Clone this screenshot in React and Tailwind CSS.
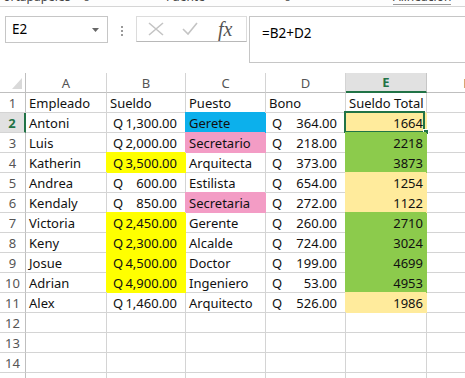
import React from "react";

const FONT = { fontFamily: "'Noto Sans', 'Open Sans', sans-serif" };

const data = [
  ["Antoni", "1,300.00", "Gerete", "364.00", "1664"],
  ["Luis", "2,000.00", "Secretario", "218.00", "2218"],
  ["Katherin", "3,500.00", "Arquitecta", "373.00", "3873"],
  ["Andrea", "600.00", "Estilista", "654.00", "1254"],
  ["Kendaly", "850.00", "Secretaria", "272.00", "1122"],
  ["Victoria", "2,450.00", "Gerente", "260.00", "2710"],
  ["Keny", "2,300.00", "Alcalde", "724.00", "3024"],
  ["Josue", "4,500.00", "Doctor", "199.00", "4699"],
  ["Adrian", "4,900.00", "Ingeniero", "53.00", "4953"],
  ["Alex", "1,460.00", "Arquitecto", "526.00", "1986"],
];

const yellowB = new Set([2, 5, 6, 7, 8]);

const base = "h-[20px] border-r border-b overflow-hidden whitespace-nowrap text-[13px] leading-[20px] text-[#111]";
const grid = "border-[#d4d4d4]";

function Cell({ children, className = "" }) {
  return <div className={`${base} ${className}`}>{children}</div>;
}

function RowHead({ n, active }) {
  return (
    <div
      className={`h-[20px] border-b border-[#d4d4d4] flex items-center justify-center text-[13px] leading-[20px] ${
        active
          ? "bg-[#e1e1e1] text-[#217346] font-bold border-r-2 border-r-[#217346]"
          : "border-r border-r-[#bfbfbf] text-[#555]"
      }`}
    >
      {n}
    </div>
  );
}

function Acct({ v, fill }) {
  return (
    <div
      className={`${base} ${
        fill
          ? "bg-[#ffff00] border-[#ffff00] shadow-[-1px_-1px_0_0_#ffff00]"
          : grid
      } flex justify-between pl-[6px] pr-[8px]`}
    >
      <span>Q</span>
      <span>{v}</span>
    </div>
  );
}

export default function App() {
  const cols = ["A", "B", "C", "D", "E", "F"];
  return (
    <div className="w-[465px] h-[378px] overflow-hidden bg-white relative" style={FONT}>
      {/* ribbon remnant */}
      <div className="h-[7px] border-b border-[#d5d5d5] overflow-hidden relative text-[12px] text-[#444] bg-[#fdfdfd]">
        <div className="flex -mt-[10px] leading-[14px]">
          <span className="ml-[-4px] w-[170px]">Portapapeles&nbsp;&nbsp;&nbsp;↘</span>
          <span className="w-[115px]">Fuente</span>
          <span className="w-[112px]">↘</span>
          <span className="border-b border-[#999]">Alineación</span>
        </div>
      </div>

      {/* formula bar */}
      <div className="flex items-start pt-[9px] h-[66px]">
        <div className="ml-[5px] w-[103px] h-[27px] border border-[#c6c6c6] flex items-center justify-between pl-[6px] pr-[8px] text-[13.5px] text-black">
          <span>E2</span>
          <svg width="7" height="4" viewBox="0 0 7 4">
            <polygon points="0,0 7,0 3.5,4" fill="#666" />
          </svg>
        </div>
        <div className="ml-[13px] mt-[10px] flex flex-col gap-[2px]">
          <div className="w-[2px] h-[2px] bg-[#9a9a9a]" />
          <div className="w-[2px] h-[2px] bg-[#9a9a9a]" />
          <div className="w-[2px] h-[2px] bg-[#9a9a9a]" />
        </div>
        <div className="ml-[13px] w-[111px] h-[26px] border border-[#dcdcdc] border-b-[#b8b8b8] flex items-center">
          <svg className="ml-[11px]" width="16" height="14" viewBox="0 0 16 14">
            <path d="M1 1 L15 13 M15 1 L1 13" stroke="#c4c4c4" strokeWidth="1.6" fill="none" />
          </svg>
          <svg className="ml-[18px]" width="16" height="14" viewBox="0 0 16 14">
            <path d="M1 7 L6 12 L15 1" stroke="#c4c4c4" strokeWidth="1.6" fill="none" />
          </svg>
          <span
            className="ml-[20px] text-[20px] italic text-[#555] leading-[20px]"
            style={{ fontFamily: "'Liberation Serif', serif" }}
          >
            fx
          </span>
        </div>
        <div className="ml-[2px] flex-1 h-[47px] border-l border-t border-b border-[#c6c6c6] pl-[12px] pt-[6px] text-[13.5px] text-black">
          =B2+D2
        </div>
      </div>

      {/* sheet */}
      <div className="grid grid-cols-[26px_81px_79px_80px_80px_81px_80px]">
        {/* header row */}
        <div className="h-[20px] border-r border-b border-[#bfbfbf] relative">
          <svg className="absolute right-[3px] bottom-[3px]" width="10" height="11" viewBox="0 0 10 11">
            <polygon points="10,0 10,11 0,11" fill="#d9d9d9" />
          </svg>
        </div>
        {cols.map((c) =>
          c === "E" ? (
            <div
              key={c}
              className="h-[20px] bg-[#e1e1e1] border-r border-[#c6c6c6] border-b-2 border-b-[#217346] text-center text-[13px] leading-[19px] font-bold text-[#217346]"
            >
              {c}
            </div>
          ) : (
            <div
              key={c}
              className="h-[20px] border-r border-b border-[#d4d4d4] border-b-[#bfbfbf] text-center text-[13px] leading-[20px] text-[#555]"
            >
              {c}
            </div>
          )
        )}

        {/* row 1 */}
        <RowHead n={1} />
        <Cell className={`${grid} pl-[3px]`}>Empleado</Cell>
        <Cell className={`${grid} pl-[3px]`}>Sueldo</Cell>
        <Cell className={`${grid} pl-[3px]`}>Puesto</Cell>
        <Cell className={`${grid} pl-[3px]`}>Bono</Cell>
        <Cell className={`${grid} pl-[3px]`}>Sueldo Total</Cell>
        <Cell className={grid} />

        {data.map((r, i) => {
          const n = i + 2;
          const cFill =
            r[2] === "Gerete"
              ? "bg-[#0cb0ec] border-[#0cb0ec] shadow-[-1px_-1px_0_0_#0cb0ec] text-[#1c2f6e]"
              : r[2] === "Secretario" || r[2] === "Secretaria"
              ? "bg-[#f39cc5] border-[#f39cc5] shadow-[-1px_-1px_0_0_#f39cc5] text-[#7d0d4c]"
              : grid;
          const total = parseInt(r[4], 10);
          const eFill =
            total < 2000
              ? "bg-[#ffeb9c] border-[#ffeb9c] shadow-[-1px_-1px_0_0_#ffeb9c] text-[#9c5700]"
              : "bg-[#8ccb4c] border-[#8ccb4c] shadow-[-1px_-1px_0_0_#8ccb4c] text-[#0d3d00]";
          return (
            <React.Fragment key={n}>
              <RowHead n={n} active={n === 2} />
              <Cell className={`${grid} pl-[3px]`}>{r[0]}</Cell>
              <Acct v={r[1]} fill={yellowB.has(i)} />
              <Cell className={`${cFill} pl-[3px]`}>{r[2]}</Cell>
              <Acct v={r[3]} />
              <div className={`${base} ${eFill} text-right pr-[3px] relative overflow-visible`}>
                {r[4]}
                {n === 2 && (
                  <>
                    <div className="absolute -left-[2px] -top-[2px] right-[1px] -bottom-[1px] border-2 border-[#217346]" />
                    <div className="absolute -right-[3px] -bottom-[3px] w-[6px] h-[6px] bg-[#217346] border border-white" />
                  </>
                )}
              </div>
              <Cell className={grid} />
            </React.Fragment>
          );
        })}

        {[12, 13, 14, 15].map((n) => (
          <React.Fragment key={n}>
            <RowHead n={n} />
            <Cell className={grid} />
            <Cell className={grid} />
            <Cell className={grid} />
            <Cell className={grid} />
            <Cell className={grid} />
            <Cell className={grid} />
          </React.Fragment>
        ))}
      </div>
    </div>
  );
}
